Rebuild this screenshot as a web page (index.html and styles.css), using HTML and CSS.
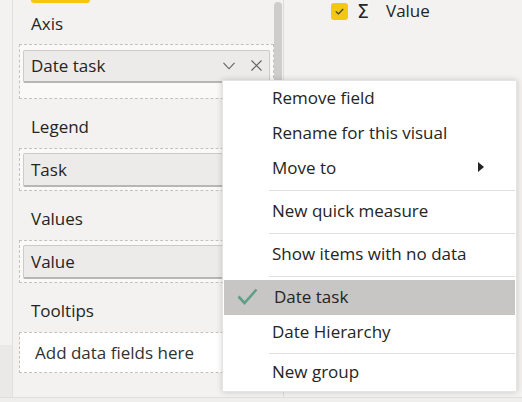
FILE: index.html
```html
<!DOCTYPE html>
<html>
<head>
<meta charset="utf-8">
<link rel="stylesheet" href="styles.css">
</head>
<body>
<div class="app">
  <div class="gutter"><div class="gutter-top"></div><div class="gutter-bottom"></div></div>
  <div class="wells">
    <div class="well-list">
      <div class="accent"></div>
      <div class="label label-first">Axis</div>
      <div class="zone zone-axis">
        <div class="pill">
          <span class="pill-text">Date task</span>
          <span class="pill-icons">
            <svg class="ico" width="12" height="8" viewBox="0 0 12 8"><path d="M0.5 0.8 L6 6.8 L11.5 0.8" fill="none" stroke="#605e5c" stroke-width="1.1"/></svg>
            <svg class="ico ico-x" width="11" height="11" viewBox="0 0 11 11"><path d="M0.5 0.5 L10.5 10.5 M10.5 0.5 L0.5 10.5" fill="none" stroke="#605e5c" stroke-width="1.1"/></svg>
          </span>
        </div>
      </div>
      <div class="label">Legend</div>
      <div class="zone"><div class="pill"><span class="pill-text">Task</span></div></div>
      <div class="label">Values</div>
      <div class="zone"><div class="pill"><span class="pill-text">Value</span></div></div>
      <div class="label">Tooltips</div>
      <div class="zone zone-empty">Add data fields here</div>
    </div>
    <div class="scrollbar"></div>
  </div>
  <div class="fields">
    <div class="field-row">
      <span class="checkbox"><svg width="9" height="7" viewBox="0 0 9 7"><path d="M0.8 3.4 L3.4 5.9 L8.2 1" fill="none" stroke="#3b3a39" stroke-width="1.2"/></svg></span>
      <span class="sigma">Σ</span>
      <span class="field-name">Value</span>
    </div>
  </div>
</div>

<div class="menu">
  <div class="item">Remove field</div>
  <div class="item">Rename for this visual</div>
  <div class="item">Move to<span class="arrow"></span></div>
  <div class="sep"></div>
  <div class="item">New quick measure</div>
  <div class="sep"></div>
  <div class="item">Show items with no data</div>
  <div class="sep"></div>
  <div class="item item-checked"><svg class="check" width="21" height="17" viewBox="0 0 21 17"><path d="M1.5 8.5 L7.5 15 L19.5 1.5" fill="none" stroke="#5f9f8a" stroke-width="2.6"/></svg><span>Date task</span></div>
  <div class="item">Date Hierarchy</div>
  <div class="sep sep-last"></div>
  <div class="item">New group</div>
</div>
</body>
</html>
```

FILE: styles.css
```css
* { box-sizing: border-box; }
html, body { margin: 0; padding: 0; }
body {
  width: 522px;
  height: 402px;
  overflow: hidden;
  position: relative;
  background: #efeeed;
  font-family: "Open Sans", "Noto Sans", sans-serif;
  font-size: 17px;
  color: #252423;
}
.app {
  display: flex;
  height: 398px;
  background: #f3f2f1;
  border-bottom: 1px solid #e1dfdd;
}
.gutter { width: 12px; display: flex; flex-direction: column; }
.gutter-top { flex: 1; }
.gutter-bottom { height: 52px; background: #ebe9e7; }
.wells {
  position: relative;
  width: 272px;
  border-left: 1px solid #e1dfdd;
  border-right: 1px solid #dddbd9;
  overflow: hidden;
}
.well-list { padding-left: 6px; }
.accent {
  margin-left: 12px;
  width: 59px;
  height: 3px;
  background: #f2c811;
  border-radius: 0 0 3px 3px;
}
.label {
  margin: 18px 0 11px 12px;
  line-height: 20px;
  height: 20px;
}
.label-first { margin-top: 11px; margin-bottom: 10px; }
.zone {
  width: 255px;
  border: 1px dashed #c3c1bf;
  background: #faf9f8;
  padding: 4px 3px 3px 3px;
}
.zone-axis { padding: 5px 3px 15px 3px; }
.pill {
  display: flex;
  align-items: center;
  height: 34px;
  padding-left: 7px;
  padding-bottom: 1px;
  background: #edebe9;
  border: 1px solid #cdcbc9;
  border-bottom: 2px solid #b8b6b4;
  border-radius: 2px;
}
.zone-axis .pill { height: 33px; }
.pill-text { flex: 1; }
.pill-icons { display: flex; align-items: center; margin-right: 7px; }
.ico-x { margin-left: 16px; }
.zone-empty {
  height: 41px;
  padding: 0 0 1px 15px;
  display: flex;
  align-items: center;
  background: #ffffff;
  color: #323130;
}
.scrollbar {
  position: absolute;
  top: 2px;
  right: 1px;
  width: 8px;
  height: 330px;
  border-radius: 4px;
  background: #cfcdcb;
}
.fields { flex: 1; }
.field-row {
  display: flex;
  align-items: center;
  height: 20px;
  margin-top: 1px;
  padding-left: 47px;
  line-height: 20px;
}
.checkbox {
  width: 17px;
  height: 17px;
  border-radius: 3px;
  background: #f2c811;
  display: flex;
  align-items: center;
  justify-content: center;
}
.sigma {
  width: 16px;
  margin-left: 7px;
  text-align: center;
  font-family: "DejaVu Sans", sans-serif;
  font-size: 19px;
  line-height: 20px;
}
.field-name { margin-left: 15px; line-height: 20px; }

.menu {
  position: absolute;
  left: 222px;
  top: 80px;
  width: 295px;
  background: #ffffff;
  border: 1px solid #e6e4e2;
  padding: 0 1px 1px;
  box-shadow: 0 0 6px rgba(0, 0, 0, 0.18);
}
.item {
  display: flex;
  align-items: center;
  height: 35px;
  padding-left: 48px;
  padding-bottom: 3px;
  color: #252423;
}
.arrow {
  margin-left: auto;
  margin-right: 31px;
  width: 0;
  height: 0;
  border-left: 6px solid #252423;
  border-top: 5px solid transparent;
  border-bottom: 5px solid transparent;
}
.sep {
  height: 1px;
  margin: 4px 0 3px 45px;
  background: #e1dfdd;
}
.sep-last { margin: 3px 0 1px 45px; }
.item-checked {
  background: #c8c6c4;
  padding-left: 13px;
  padding-bottom: 2px;
}
.item-checked span { margin-left: 16px; }
```
